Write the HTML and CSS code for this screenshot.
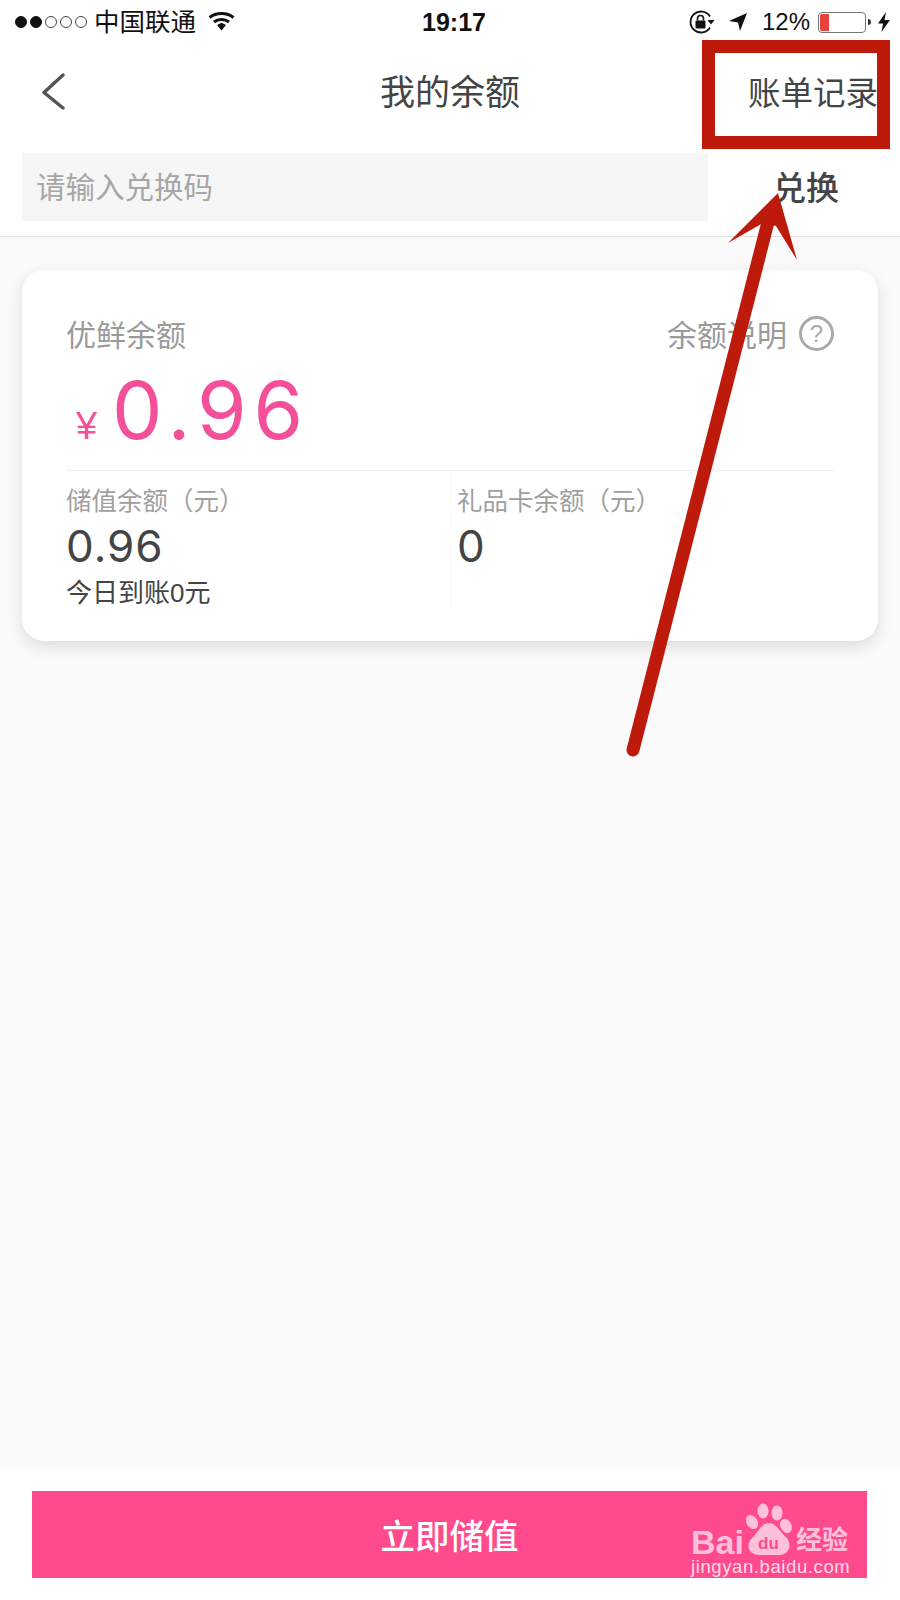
FILE: index.html
```html
<!DOCTYPE html>
<html lang="zh-CN">

<head>
    <meta charset="UTF-8">
    <meta name="viewport" content="width=device-width, initial-scale=1.0">
    <title>我的余额</title>
    <link rel="stylesheet" href="styles.css">
</head>

<body>
    <div id="container">
        <div class="top">
            <div class="status">
                <div class="status-left">
                    <div class="dots">
                        <span class="dot on"></span>
                        <span class="dot on"></span>
                        <span class="dot"></span>
                        <span class="dot"></span>
                        <span class="dot"></span>
                    </div>
                    <span class="carrier">中国联通</span>
                    <svg class="wifi" width="27" height="20" viewBox="0 0 27 20">
                        <path d="M1.5 6.5C8 1 19 1 25.5 6.5" fill="none" stroke="#111" stroke-width="3" />
                        <path d="M6 11C10 7.6 17 7.6 21 11" fill="none" stroke="#111" stroke-width="3" />
                        <polygon points="9,14 13.5,11.8 18,14 13.5,19.5" fill="#111" />
                    </svg>
                </div>
                <div class="time">19:17</div>
                <div class="status-right">
                    <svg width="26" height="24" viewBox="0 0 26 24">
                        <path d="M21 6.5A10.5 10.5 0 1 0 21 17.5" fill="none" stroke="#111" stroke-width="1.8" />
                        <polygon points="18.5,10 25.5,10 22,14.5" fill="#111" />
                        <rect x="6.5" y="10.5" width="10" height="8" rx="1" fill="#111" />
                        <path d="M8.5 10.5V8.5a3 3 0 0 1 6 0V10.5" fill="none" stroke="#111" stroke-width="1.6" />
                    </svg>
                    <svg class="nav-arrow" width="20" height="20" viewBox="0 0 20 20">
                        <polygon points="19,1 1,9 10,10.5 12,19" fill="#111" />
                    </svg>
                    <span class="percent">12%</span>
                    <div class="battery">
                        <div class="battery-fill"></div>
                    </div>
                    <div class="battery-tip"></div>
                    <svg class="bolt" width="12" height="20" viewBox="0 0 12 20">
                        <polygon points="8,0 0,11.5 5,11.5 3.5,20 12,8 6.5,8" fill="#111" />
                    </svg>
                </div>
            </div>
            <div class="nav">
                <svg class="back" width="24" height="38" viewBox="0 0 24 38">
                    <polyline points="22,2 3,19.5 22,35" fill="none" stroke="#555" stroke-width="3.4" stroke-linecap="round" stroke-linejoin="round" />
                </svg>
                <div class="nav-title">我的余额</div>
                <div class="nav-link">账单记录</div>
            </div>
            <div class="search-row">
                <div class="search-box">请输入兑换码</div>
                <div class="search-btn">兑换</div>
            </div>
        </div>

        <div class="content">
            <div class="card">
                <div class="card-head">
                    <span class="label">优鲜余额</span>
                    <div class="explain">
                        <span class="label">余额说明</span>
                        <span class="help">?</span>
                    </div>
                </div>
                <div class="amount">
                    <span class="yen">¥</span>
                    <span class="amount-num">0.96</span>
                </div>
                <div class="card-cols">
                    <div class="col">
                        <div class="col-label">储值余额（元）</div>
                        <div class="col-num">0.96</div>
                        <div class="col-note">今日到账0元</div>
                    </div>
                    <div class="col col-right">
                        <div class="col-label">礼品卡余额（元）</div>
                        <div class="col-num">0</div>
                    </div>
                </div>
            </div>
        </div>

        <div class="bottom">
            <div class="pay-btn">立即储值</div>
        </div>

        <!-- annotation drawn over the screenshot -->
        <div class="mark-box"></div>
        <svg class="mark-arrow" width="900" height="800" viewBox="0 0 900 800">
            <line x1="633" y1="750" x2="768" y2="222" stroke="#bd1a0c" stroke-width="13" stroke-linecap="round" />
            <polygon points="778,193 797,260 776,226 763,223 728,243" fill="#bd1a0c" />
        </svg>

        <!-- watermark -->
        <div class="wm">
            <div class="wm-logo">
                <span class="wm-bai">Bai</span>
                <div class="wm-paw">
                    <svg width="50" height="56" viewBox="0 0 50 56">
                        <ellipse cx="6" cy="19" rx="5.5" ry="7.5" transform="rotate(-30 6 19)" fill="#ffc0dc" />
                        <ellipse cx="17" cy="8" rx="5.5" ry="7.5" fill="#ffc0dc" />
                        <ellipse cx="31" cy="10" rx="5.5" ry="7.5" fill="#ffc0dc" />
                        <ellipse cx="40" cy="23" rx="5.5" ry="7.5" transform="rotate(-25 40 23)" fill="#ffc0dc" />
                        <path d="M23 20C30 20 33 28 39 33C47 40 44 52 33 52H13C3 52 -1 42 6 35C12 30 15 20 23 20Z" fill="#ffc0dc" />
                    </svg>
                    <span class="wm-du">du</span>
                </div>
                <span class="wm-cn">经验</span>
            </div>
            <div class="wm-url">jingyan.baidu.com</div>
        </div>
    </div>
</body>

</html>
```

FILE: styles.css
```css
html {
    height: 100%;
}

body {
    margin: 0;
    font-family: "Liberation Sans", "Noto Sans CJK SC", sans-serif;
}

#container {
    position: relative;
    width: 900px;
    height: 1600px;
    display: flex;
    flex-direction: column;
    background-color: #fafafa;
    overflow: hidden;
}

.top {
    background-color: white;
    border-bottom: 1px solid #e2e2e2;
    height: 236px;
    box-sizing: content-box;
}

/* status bar */
.status {
    height: 44px;
    display: flex;
    align-items: center;
    justify-content: space-between;
    padding: 0 10px 0 15px;
    color: #111;
}

.status-left {
    flex: 1;
    display: flex;
    align-items: center;
}

.dots {
    display: flex;
    gap: 3px;
}

.dot {
    width: 12px;
    height: 12px;
    box-sizing: border-box;
    border: 1px solid #444;
    border-radius: 50%;
}

.dot.on {
    background-color: #111;
    border-color: #111;
}

.carrier {
    font-size: 25.5px;
    margin-left: 7px;
    line-height: 44px;
}

.wifi {
    margin-left: 12px;
    margin-top: -3px;
}

.time {
    font-size: 25px;
    font-weight: bold;
    margin-left: 3px;
}

.status-right {
    flex: 1;
    display: flex;
    align-items: center;
    justify-content: flex-end;
}

.nav-arrow {
    margin-left: 13px;
}

.percent {
    font-size: 24px;
    margin-left: 14px;
}

.battery {
    width: 48px;
    height: 21px;
    margin-left: 8px;
    box-sizing: border-box;
    border: 1px solid #777;
    border-radius: 4px;
    padding: 1px;
}

.battery-fill {
    width: 9px;
    height: 100%;
    background-color: #e8423c;
    border-radius: 2px 0 0 2px;
}

.battery-tip {
    width: 3px;
    height: 6px;
    margin-left: 2px;
    background-color: #333;
    border-radius: 0 3px 3px 0;
}

.bolt {
    margin-left: 7px;
}

/* nav */
.nav {
    position: relative;
    height: 96px;
    display: flex;
    align-items: center;
    justify-content: center;
}

.back {
    position: absolute;
    left: 41px;
    top: 29px;
}

.nav-title {
    font-size: 35px;
    line-height: 48px;
    margin-top: 2px;
    color: #444;
}

.nav-link {
    position: absolute;
    right: 22px;
    top: 23px;
    font-size: 32.5px;
    color: #444;
}

/* search */
.search-row {
    display: flex;
    margin: 13px 0 0 22px;
}

.search-box {
    width: 686px;
    height: 68px;
    line-height: 70px;
    box-sizing: border-box;
    padding-left: 14px;
    background-color: #f6f6f6;
    font-size: 29.5px;
    color: #a6a6a6;
}

.search-btn {
    margin-left: 65px;
    font-size: 33px;
    line-height: 72px;
    font-weight: 500;
    color: #444;
}

/* card */
.content {
    flex: 1;
    padding: 33px 22px 0;
}

.card {
    height: 371px;
    box-sizing: border-box;
    padding: 40px 44px 0 44px;
    background-color: white;
    border-radius: 22px;
    box-shadow: 0 6px 16px rgba(0, 0, 0, .12);
}

.card-head {
    display: flex;
    align-items: center;
    justify-content: space-between;
    height: 46px;
}

.label {
    font-size: 30px;
    color: #9a9a9a;
}

.explain {
    display: flex;
    align-items: center;
    gap: 12px;
}

.help {
    width: 35px;
    height: 35px;
    box-sizing: border-box;
    border: 3px solid #aaa;
    border-radius: 50%;
    text-align: center;
    font-size: 24px;
    line-height: 29px;
    color: #aaa;
}

.amount {
    display: flex;
    align-items: baseline;
    height: 115px;
    box-sizing: border-box;
    padding: 8px 0 0 10px;
    color: #f4509a;
    border-bottom: 1px solid #f0f0f0;
}

.yen {
    font-size: 38px;
    width: 36px;
}

.amount-num {
    font-family: Inter, "Liberation Sans", sans-serif;
    font-size: 80px;
    line-height: 92px;
    letter-spacing: 7px;
}

.card-cols {
    display: flex;
}

.col {
    flex: none;
    width: 384px;
    padding-top: 12px;
}

.col-right {
    flex: 1;
    width: auto;
    border-left: 1px solid #f8f8f8;
    padding-left: 6px;
}

.col-label {
    font-size: 25.5px;
    line-height: 36px;
    color: #9f9f9f;
}

.col-num {
    font-family: Inter, "Liberation Sans", sans-serif;
    font-size: 44px;
    line-height: 50px;
    margin-top: 2px;
    letter-spacing: 1px;
    color: #444;
}

.col-note {
    font-size: 26px;
    line-height: 38px;
    margin-top: 3px;
    color: #444;
}

/* bottom button */
.bottom {
    height: 131px;
    box-sizing: border-box;
    padding: 22px 33px 0 32px;
    background-color: white;
}

.pay-btn {
    height: 87px;
    line-height: 92px;
    text-align: center;
    background-color: #ff4a8d;
    color: white;
    font-size: 34.5px;
    font-weight: 500;
}

/* annotation */
.mark-box {
    position: absolute;
    left: 702px;
    top: 40px;
    width: 188px;
    height: 109px;
    box-sizing: border-box;
    border: 13px solid #bd1a0c;
}

.mark-arrow {
    position: absolute;
    left: 0;
    top: 0;
}

/* watermark */
.wm {
    position: absolute;
    left: 691px;
    top: 1503px;
    width: 170px;
}

.wm-logo {
    display: flex;
    align-items: flex-end;
    height: 56px;
    color: #ffc0dc;
}

.wm-bai {
    font-size: 34px;
    font-weight: bold;
    line-height: 30px;
    width: 55px;
    margin-bottom: 2px;
}

.wm-paw {
    position: relative;
    width: 50px;
    height: 56px;
}

.wm-du {
    position: absolute;
    left: 12px;
    top: 32px;
    font-size: 17px;
    line-height: 18px;
    font-weight: bold;
    color: #ff4a8d;
}

.wm-cn {
    font-size: 26px;
    line-height: 34px;
    margin-bottom: 2px;
    font-weight: bold;
}

.wm-url {
    font-size: 18.5px;
    line-height: 20px;
    letter-spacing: .6px;
    color: #ffdceb;
    margin-top: -2px;
    white-space: nowrap;
}
```
